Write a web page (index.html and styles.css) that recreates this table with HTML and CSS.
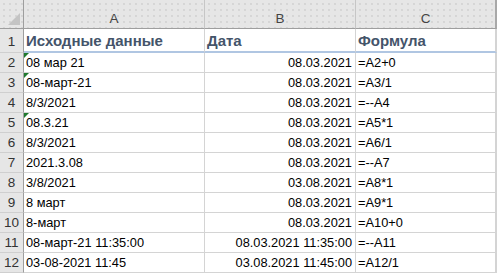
FILE: index.html
```html
<!DOCTYPE html>
<html lang="ru">
<head>
<meta charset="utf-8">
<link rel="stylesheet" href="styles.css">
</head>
<body>
<div class="sheet">
  <div class="hdr corner"><span class="corner-tri"></span></div>
  <div class="hdr">A</div>
  <div class="hdr">B</div>
  <div class="hdr last">C</div>

  <div class="rh r1">1</div>
  <div class="cell title">Исходные данные</div>
  <div class="cell title">Дата</div>
  <div class="cell title last">Формула</div>

  <div class="rh">2</div>
  <div class="cell"><span class="err"></span>08 мар 21</div>
  <div class="cell num">08.03.2021</div>
  <div class="cell last">=A2+0</div>

  <div class="rh">3</div>
  <div class="cell"><span class="err"></span>08-март-21</div>
  <div class="cell num">08.03.2021</div>
  <div class="cell last">=A3/1</div>

  <div class="rh">4</div>
  <div class="cell">8/3/2021</div>
  <div class="cell num">08.03.2021</div>
  <div class="cell last">=--A4</div>

  <div class="rh">5</div>
  <div class="cell"><span class="err"></span>08.3.21</div>
  <div class="cell num">08.03.2021</div>
  <div class="cell last">=A5*1</div>

  <div class="rh">6</div>
  <div class="cell">8/3/2021</div>
  <div class="cell num">08.03.2021</div>
  <div class="cell last">=A6/1</div>

  <div class="rh">7</div>
  <div class="cell">2021.3.08</div>
  <div class="cell num">08.03.2021</div>
  <div class="cell last">=--A7</div>

  <div class="rh">8</div>
  <div class="cell">3/8/2021</div>
  <div class="cell num">03.08.2021</div>
  <div class="cell last">=A8*1</div>

  <div class="rh">9</div>
  <div class="cell">8 март</div>
  <div class="cell num">08.03.2021</div>
  <div class="cell last">=A9*1</div>

  <div class="rh">10</div>
  <div class="cell">8-март</div>
  <div class="cell num">08.03.2021</div>
  <div class="cell last">=A10+0</div>

  <div class="rh">11</div>
  <div class="cell">08-март-21 11:35:00</div>
  <div class="cell num">08.03.2021 11:35:00</div>
  <div class="cell last">=--A11</div>

  <div class="rh">12</div>
  <div class="cell">03-08-2021 11:45</div>
  <div class="cell num">03.08.2021 11:45:00</div>
  <div class="cell last">=A12/1</div>
</div>
</body>
</html>
```
FILE: styles.css
```css
html, body {
  margin: 0;
  padding: 0;
  background: #ffffff;
}

.sheet {
  display: grid;
  grid-template-columns: 24px 181px 151px 141px;
  grid-template-rows: 29px 24px repeat(11, 20px);
  width: 497px;
  font-family: "Liberation Sans", Arial, sans-serif;
  font-size: 12.8px;
  color: #000;
}

.hdr {
  box-sizing: border-box;
  background-color: #e6e6e6;
  background-image: radial-gradient(circle, #cdcdcd 0.6px, transparent 0.9px);
  background-size: 6px 6px;
  background-position: 1px 1px;
  border-right: 1px solid #c6c6c6;
  border-bottom: 1px solid #9e9e9e;
  display: flex;
  align-items: flex-end;
  justify-content: center;
  padding-bottom: 1px;
  line-height: 16px;
  font-size: 13.5px;
  color: #444;
}

.hdr.last {
  border-right: 2px solid #a8a8a8;
}

.corner {
  position: relative;
  border-right: 1px solid #9e9e9e;
}

.corner-tri {
  position: absolute;
  right: 3px;
  bottom: 3px;
  width: 0;
  height: 0;
  border-left: 12px solid transparent;
  border-bottom: 12px solid #c4c4c4;
}

.rh {
  box-sizing: border-box;
  background: #e6e6e6;
  border-right: 1px solid #9e9e9e;
  border-bottom: 1px solid #cfcfcf;
  display: flex;
  align-items: center;
  justify-content: center;
  color: #333;
  font-size: 13.5px;
  line-height: 19px;
}

.rh.r1 {
  padding-top: 2px;
}

.cell {
  position: relative;
  box-sizing: border-box;
  border-right: 1px solid #d4d4d4;
  border-bottom: 1px solid #d4d4d4;
  display: flex;
  align-items: center;
  padding: 0 3px 0 2px;
  line-height: 19px;
  white-space: nowrap;
}

.cell.last {
  border-right: 2px solid #d4d4d4;
}

.cell.num {
  justify-content: flex-end;
}

.cell.title {
  font-size: 15px;
  font-weight: bold;
  color: #44546a;
  border-bottom: 2px solid #b0c6e2;
  padding-top: 1px;
}

.err {
  position: absolute;
  left: 0;
  top: 0;
  width: 0;
  height: 0;
  border-top: 5px solid #1f7a2e;
  border-right: 5px solid transparent;
}
```
